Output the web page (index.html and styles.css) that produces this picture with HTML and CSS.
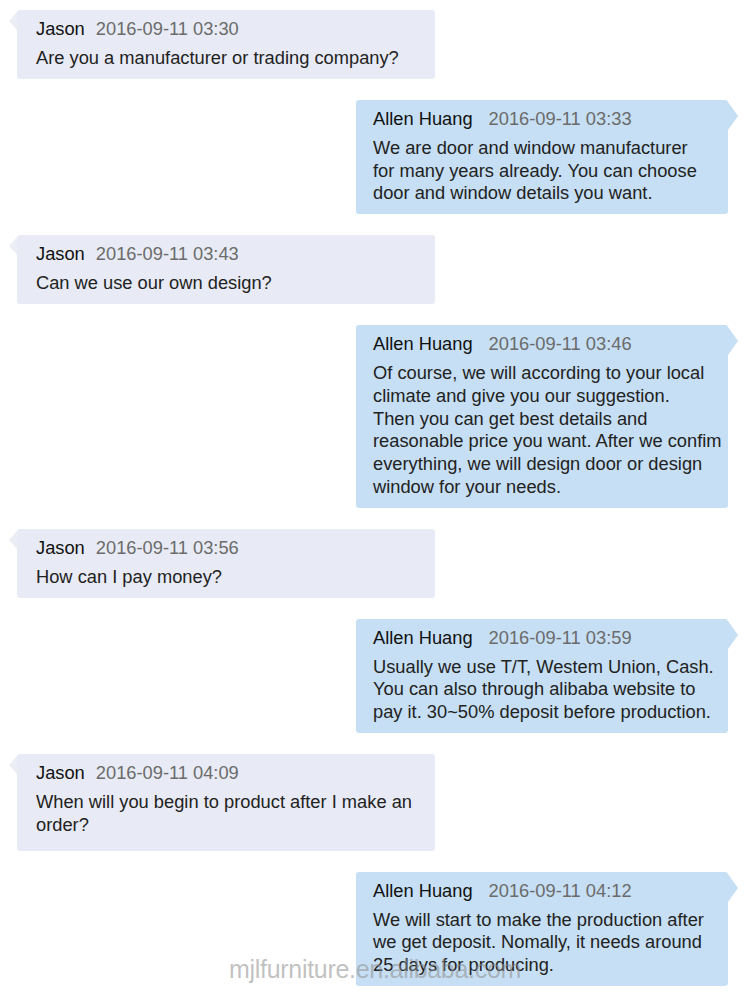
FILE: index.html
```html
<!DOCTYPE html>
<html>
<head>
<meta charset="utf-8">
<link rel="stylesheet" href="styles.css">
</head>
<body>
<div class="chat">
  <div class="msg them">
    <div class="head"><span class="name">Jason</span><span class="time">2016-09-11 03:30</span></div>
    <div class="text">Are you a manufacturer or trading company?</div>
  </div>
  <div class="msg me">
    <div class="head"><span class="name">Allen Huang</span><span class="time">2016-09-11 03:33</span></div>
    <div class="text">We are door and window manufacturer<br>for many years already. You can choose<br>door and window details you want.</div>
  </div>
  <div class="msg them">
    <div class="head"><span class="name">Jason</span><span class="time">2016-09-11 03:43</span></div>
    <div class="text">Can we use our own design?</div>
  </div>
  <div class="msg me">
    <div class="head"><span class="name">Allen Huang</span><span class="time">2016-09-11 03:46</span></div>
    <div class="text">Of course, we will according to your local<br>climate and give you our suggestion.<br>Then you can get best details and<br>reasonable price you want. After we confim<br>everything, we will design door or design<br>window for your needs.</div>
  </div>
  <div class="msg them">
    <div class="head"><span class="name">Jason</span><span class="time">2016-09-11 03:56</span></div>
    <div class="text">How can I pay money?</div>
  </div>
  <div class="msg me">
    <div class="head"><span class="name">Allen Huang</span><span class="time">2016-09-11 03:59</span></div>
    <div class="text">Usually we use T/T, Westem Union, Cash.<br>You can also through alibaba website to<br>pay it. 30~50% deposit before production.</div>
  </div>
  <div class="msg them tall">
    <div class="head"><span class="name">Jason</span><span class="time">2016-09-11 04:09</span></div>
    <div class="text">When will you begin to product after I make an<br>order?</div>
  </div>
  <div class="msg me">
    <div class="head"><span class="name">Allen Huang</span><span class="time">2016-09-11 04:12</span></div>
    <div class="text">We will start to make the production after<br>we get deposit. Nomally, it needs around<br>25 days for producing.</div>
  </div>
  <div class="watermark">mjlfurniture.en.alibaba.com</div>
</div>
</body>
</html>
```
FILE: styles.css
```css
html, body {
  margin: 0;
  padding: 0;
  background: #ffffff;
}
body {
  font-family: "Liberation Sans", Arial, Helvetica, sans-serif;
  width: 750px;
  height: 998px;
  overflow: hidden;
}
.chat {
  position: relative;
  display: flex;
  flex-direction: column;
  gap: 21px;
  padding: 10px 22px 0 17px;
  height: 998px;
  box-sizing: border-box;
}
.msg {
  position: relative;
  padding: 9px 4px 9px 18px;
  border-radius: 3px;
  font-size: 18.3px;
  color: #222222;
  box-sizing: border-box;
}
.msg.them {
  align-self: flex-start;
  width: 418px;
  background: #e8ebf5;
  padding-left: 19px;
}
.msg.tall {
  padding-bottom: 14px;
}
.msg.me {
  align-self: flex-end;
  width: 372px;
  background: #c6dff4;
  padding-left: 17px;
}
.msg.them::before {
  content: "";
  position: absolute;
  left: -8px;
  top: 2px;
  border-top: 9px solid transparent;
  border-bottom: 9px solid transparent;
  border-right: 8px solid #eceef6;
}
.msg.me::after {
  content: "";
  position: absolute;
  right: -10px;
  top: 2px;
  border-top: 14px solid transparent;
  border-bottom: 14px solid transparent;
  border-left: 10px solid #c6dff4;
}
.head {
  height: 20px;
  line-height: 20px;
  white-space: nowrap;
}
.name {
  color: #111111;
}
.time {
  color: #6b6b6b;
  margin-left: 11px;
}
.me .time {
  margin-left: 16px;
}
.text {
  margin-top: 8px;
  line-height: 22.8px;
  white-space: nowrap;
  color: #222222;
}
.watermark {
  position: absolute;
  left: 229px;
  top: 955px;
  font-size: 25px;
  letter-spacing: -0.3px;
  color: rgba(140, 140, 140, 0.55);
  white-space: nowrap;
  pointer-events: none;
}
```
